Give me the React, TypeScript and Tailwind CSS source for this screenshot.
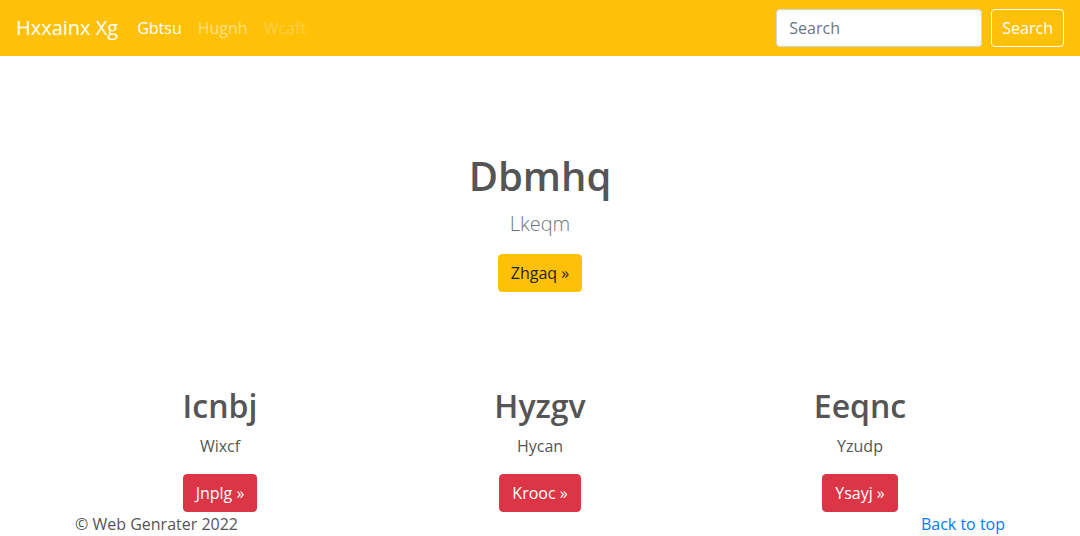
export default function App() {
  const cols = [
    { title: "Icnbj", text: "Wixcf", btn: "Jnplg" },
    { title: "Hyzgv", text: "Hycan", btn: "Krooc" },
    { title: "Eeqnc", text: "Yzudp", btn: "Ysayj" },
  ];

  return (
    <div className="min-h-screen bg-white text-[#555] font-['Open_Sans',sans-serif]">
      <nav className="flex h-14 items-center bg-[#ffc107] px-4">
        <a className="mr-[11px] text-xl leading-[30px] text-white">Hxxainx Xg</a>
        <ul className="flex text-base">
          <li className="px-2 text-white">Gbtsu</li>
          <li className="px-2 text-white/50">Hugnh</li>
          <li className="px-2 text-white/25">Wcaft</li>
        </ul>
        <form className="ml-auto flex items-center">
          <input
            className="h-[38px] w-[206px] rounded border border-[#ced4da] bg-white px-3 text-base text-[#495057] placeholder-[#6c757d] outline-none"
            placeholder="Search"
          />
          <button
            type="button"
            className="ml-[9px] h-[38px] rounded border border-white px-2.5 text-base text-white"
          >
            Search
          </button>
        </form>
      </nav>

      <section className="pt-[96px] text-center">
        <h1 className="text-[40px] font-semibold leading-[48px] text-[#555]">Dbmhq</h1>
        <p className="mt-[9px] text-xl font-light leading-[30px] text-[#6c757d]">Lkeqm</p>
        <button className="mt-[15px] rounded border border-[#ffc107] bg-[#ffc107] px-3 py-1.5 text-base leading-6 text-[#212529]">
          Zhgaq »
        </button>
      </section>

      <div className="mx-auto mt-[95px] grid w-[960px] grid-cols-3">
        {cols.map((c) => (
          <div key={c.title} className="px-[15px] text-center">
            <h2 className="text-[32px] font-semibold leading-[38px] text-[#555]">{c.title}</h2>
            <p className="mt-[9px] text-base leading-6">{c.text}</p>
            <button className="mt-4 rounded border border-[#dc3545] bg-[#dc3545] px-3 py-1.5 text-base leading-6 text-white">
              {c.btn} »
            </button>
          </div>
        ))}
      </div>

      <footer className="mx-auto flex w-[960px] justify-between px-[15px] text-base leading-6">
        <p>© Web Genrater 2022</p>
        <a className="text-[#007bff]">Back to top</a>
      </footer>
    </div>
  );
}
